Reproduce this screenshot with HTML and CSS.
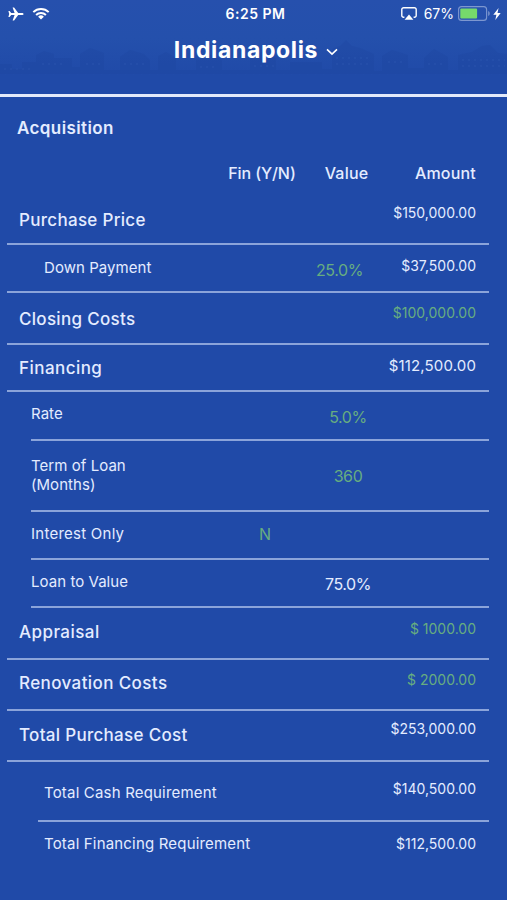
FILE: index.html
```
<!DOCTYPE html>
<html lang="en">
<head>
    <meta charset="UTF-8">
    <meta name="viewport" content="width=device-width, initial-scale=1.0">
    <title>Indianapolis</title>
    <link rel="stylesheet" href="styles.css">
</head>
<body>
    <header class="header">
        <svg class="skyline" viewBox="0 0 507 40" preserveAspectRatio="none">
            <path d="M0 29V24H12V29H22V22H36V15L44 11L54 14V18H72V27H80V14L90 8L104 13V30H120V17L130 10L144 14L150 20V30H158V16L166 12L176 18V30H196V20L208 14L222 20V30H250V18L262 12L276 18V30H290V22H322V29H332V9L340 6L346 0L352 6L360 8L374 14V31H382V16L392 10L408 15V28H424V18L434 9L448 17V30H458V15L472 12L482 6L490 5L498 13L507 14V34H0Z"/>
            <path class="windows" d="M4 29H30M42 24H66M86 24H102M124 24H146M200 27H218M254 26H274M336 18H370M336 24H370M388 22H404M428 24H446M462 20H505M462 26H505"/>
        </svg>
        <div class="status-bar">
            <div class="status-left">
                <svg class="plane" viewBox="0 0 16 14">
                    <path d="M15.6 7C15.6 6.3 14.8 5.9 13.8 5.9H10.2L6.1 0.4H4.6L6.6 5.9H3.2L1.6 3.9H0.4L1.2 7L0.4 10.1H1.6L3.2 8.1H6.6L4.6 13.6H6.1L10.2 8.1H13.8C14.8 8.1 15.6 7.7 15.6 7Z"/>
                </svg>
                <svg class="wifi" viewBox="0 0 18 13">
                    <path class="arc" d="M1.3 5.1A11 11 0 0 1 16.7 5.1"/>
                    <path class="arc" d="M4.1 8A7 7 0 0 1 13.9 8"/>
                    <path d="M9 12.6L6.1 9.7A4.2 4.2 0 0 1 11.9 9.7Z"/>
                </svg>
            </div>
            <div class="time">6:25 PM</div>
            <div class="status-right">
                <svg class="airplay" viewBox="0 0 16 14">
                    <path class="screen" d="M3.4 10.2H2.6A1.8 1.8 0 0 1 0.8 8.4V2.6A1.8 1.8 0 0 1 2.6 0.8H13.4A1.8 1.8 0 0 1 15.2 2.6V8.4A1.8 1.8 0 0 1 13.4 10.2H12.6"/>
                    <path d="M8 7.6L12.4 12.8H3.6Z"/>
                </svg>
                <span class="percent">67%</span>
                <svg class="battery" viewBox="0 0 32 15">
                    <rect class="case" x="0.6" y="0.6" width="28" height="13.8" rx="3"/>
                    <rect class="charge" x="2.3" y="2.4" width="16.8" height="10.2" rx="1"/>
                    <path class="tip" d="M30.2 5V10C31.3 9.6 31.7 8.6 31.7 7.5S31.3 5.4 30.2 5Z"/>
                </svg>
                <svg class="bolt" viewBox="0 0 8 12">
                    <path d="M5.6 0L0.3 6.8H3.4L2.3 12L7.7 5H4.5Z"/>
                </svg>
            </div>
        </div>
        <div class="title">
            <h1>Indianapolis</h1>
            <svg class="chevron" viewBox="0 0 12 8">
                <path d="M1 1.4L6 6.2L11 1.4"/>
            </svg>
        </div>
    </header>

    <main class="content">
        <h2>Acquisition</h2>

        <div class="row head">
            <span></span>
            <span class="fin">Fin (Y/N)</span>
            <span class="value">Value</span>
            <span class="amount">Amount</span>
        </div>
        <div class="row main price">
            <span class="label">Purchase Price</span>
            <span class="amount">$150,000.00</span>
        </div>
        <div class="row sub down">
            <span class="label">Down Payment</span>
            <span class="value editable">25.0%</span>
            <span class="amount">$37,500.00</span>
        </div>
        <div class="row main closing">
            <span class="label">Closing Costs</span>
            <span class="amount editable">$100,000.00</span>
        </div>
        <div class="row main financing">
            <span class="label">Financing</span>
            <span class="amount">$112,500.00</span>
        </div>
        <div class="row nested rate">
            <span class="label">Rate</span>
            <span class="value editable">5.0%</span>
        </div>
        <div class="row nested term">
            <span class="label">Term of Loan<br>(Months)</span>
            <span class="value editable">360</span>
        </div>
        <div class="row nested interest">
            <span class="label">Interest Only</span>
            <span class="fin editable">N</span>
        </div>
        <div class="row nested ltv">
            <span class="label">Loan to Value</span>
            <span class="value">75.0%</span>
        </div>
        <div class="row main appraisal">
            <span class="label">Appraisal</span>
            <span class="amount editable">$ 1000.00</span>
        </div>
        <div class="row main renovation">
            <span class="label">Renovation Costs</span>
            <span class="amount editable">$ 2000.00</span>
        </div>
        <div class="row main total">
            <span class="label">Total Purchase Cost</span>
            <span class="amount">$253,000.00</span>
        </div>
        <div class="row last cash">
            <span class="label">Total Cash Requirement</span>
            <span class="amount">$140,500.00</span>
        </div>
        <div class="row last loan">
            <span class="label">Total Financing Requirement</span>
            <span class="amount">$112,500.00</span>
        </div>
    </main>
</body>
</html>
```
FILE: styles.css
```
* {
    margin: 0;
    padding: 0;
    box-sizing: border-box;
}

body {
    height: 900px;
    background-color: #204aa8;
    font-family: Inter, "Liberation Sans", sans-serif;
    color: #e4ecff;
    overflow: hidden;
}

svg {
    display: block;
    fill: #fff;
}

/* Header */
.header {
    position: relative;
    height: 97px;
    background: linear-gradient(#2650ad, #2450ac 40%, #204aa8 80%);
    border-bottom: 3px solid #e3eafa;
    color: #fff;
}

.skyline {
    position: absolute;
    left: 0;
    top: 40px;
    width: 100%;
    height: 40px;
    fill: #1d459f;
    opacity: 0.3;
}

.skyline .windows {
    fill: none;
    stroke: #3a63b8;
    stroke-width: 2;
    stroke-dasharray: 2 4;
    opacity: 0.5;
}

.status-bar {
    position: relative;
    display: grid;
    grid-template-columns: 1fr auto 1fr;
    align-items: center;
    height: 27px;
    padding: 0 6px 0 8px;
}

.status-left,
.status-right {
    display: flex;
    align-items: center;
}

.status-right {
    justify-content: flex-end;
}

.plane {
    width: 16px;
    height: 14px;
    margin-right: 8px;
}

.wifi {
    width: 18px;
    height: 13px;
}

.wifi .arc {
    fill: none;
    stroke: #fff;
    stroke-width: 2;
}

.time {
    padding-left: 2px;
    font-size: 14px;
    font-weight: 600;
    letter-spacing: 0.5px;
}

.airplay {
    width: 16px;
    height: 14px;
    margin-right: 7px;
}

.airplay .screen {
    fill: none;
    stroke: #fff;
    stroke-width: 1.4;
}

.percent {
    font-size: 14px;
    margin-right: 4px;
}

.battery {
    width: 32px;
    height: 15px;
    margin-right: 3px;
}

.battery .case {
    fill: none;
    stroke: #7d97d0;
    stroke-width: 1.1;
}

.battery .charge {
    fill: #76d96b;
}

.battery .tip {
    fill: #7d97d0;
}

.bolt {
    width: 8px;
    height: 12px;
}

.title {
    position: relative;
    display: flex;
    align-items: center;
    justify-content: center;
    gap: 8px;
    height: 45px;
    padding-left: 5px;
}

.title h1 {
    font-size: 23px;
    font-weight: 700;
    letter-spacing: 0.65px;
}

.chevron {
    width: 12px;
    height: 8px;
    margin-top: 5px;
}

.chevron path {
    fill: none;
    stroke: #fff;
    stroke-width: 1.6;
}

/* Table */
.content {
    padding: 21px 18px 0 7px;
}

.content h2 {
    padding-left: 10px;
    font-size: 17px;
    font-weight: 600;
    line-height: 20px;
    letter-spacing: 0.4px;
}

.row {
    display: grid;
    grid-template-columns: minmax(0, 1fr) 90px 76px 90px;
    align-items: start;
    padding-right: 13px;
    border-bottom: 2px solid #8ba4da;
    line-height: 20px;
    white-space: nowrap;
}

.label {
    grid-column: 1;
    grid-row: 1;
    font-size: 15px;
    letter-spacing: 0.05px;
}

.fin {
    grid-column: 2;
    grid-row: 1;
    font-size: 16px;
    text-align: center;
}

.value {
    grid-column: 3;
    grid-row: 1;
    font-size: 16px;
    letter-spacing: -0.4px;
    text-align: center;
}

.amount {
    grid-column: 4;
    grid-row: 1;
    font-size: 14px;
    text-align: right;
}

.editable {
    color: #67ad80;
}

.head {
    height: 55px;
    padding-top: 25px;
    border-bottom: none;
}

.head span {
    font-size: 16px;
    font-weight: 500;
}

.head .fin {
    padding-right: 6px;
    letter-spacing: -0.1px;
}

.head .value {
    padding-right: 3px;
    letter-spacing: 0.2px;
}

.head .amount {
    letter-spacing: 0.2px;
}

.main .label {
    padding-left: 12px;
    font-size: 17px;
    font-weight: 500;
    letter-spacing: 0.3px;
}

.sub .label {
    padding-left: 37px;
}

.nested {
    margin-left: 24px;
}

.last {
    margin-left: 31px;
}

.last .label {
    padding-left: 6px;
    letter-spacing: 0.18px;
}

/* Row heights and text offsets */
.price { height: 52px; }
.price .label { margin-top: 17px; }
.price .amount { margin-top: 10px; }

.down { height: 48px; }
.down .label { margin-top: 13px; }
.down .value { margin-top: 15px; padding-right: 17px; }
.down .amount { margin-top: 11px; }

.closing { height: 52px; }
.closing .label { margin-top: 16px; }
.closing .amount { margin-top: 10px; }

.financing { height: 47px; }
.financing .label { margin-top: 13px; letter-spacing: 0.45px; }
.financing .amount { margin-top: 11px; font-size: 15px; letter-spacing: 0.15px; }

.rate { height: 49px; }
.rate .label { margin-top: 12px; }
.rate .value { margin-top: 15px; }

.term { height: 71px; }
.term .label { margin-top: 15px; line-height: 19px; }
.term .value { margin-top: 25px; }

.interest { height: 48px; }
.interest .label { margin-top: 12px; letter-spacing: 0.25px; }
.interest .fin { margin-top: 12px; }

.ltv { height: 48px; }
.ltv .label { margin-top: 12px; }
.ltv .value { margin-top: 14px; }

.appraisal { height: 52px; }
.appraisal .label { margin-top: 14px; letter-spacing: 0.45px; }
.appraisal .amount { margin-top: 11px; }

.renovation { height: 51px; }
.renovation .label { margin-top: 13px; letter-spacing: 0.4px; }
.renovation .amount { margin-top: 10px; }

.total { height: 51px; }
.total .label { margin-top: 14px; }
.total .amount { margin-top: 8px; }

.cash { height: 60px; }
.cash .label { margin-top: 21px; }
.cash .amount { margin-top: 17px; }

.loan { border-bottom: none; }
.loan .label { margin-top: 12px; }
.loan .amount { margin-top: 12px; }
```
